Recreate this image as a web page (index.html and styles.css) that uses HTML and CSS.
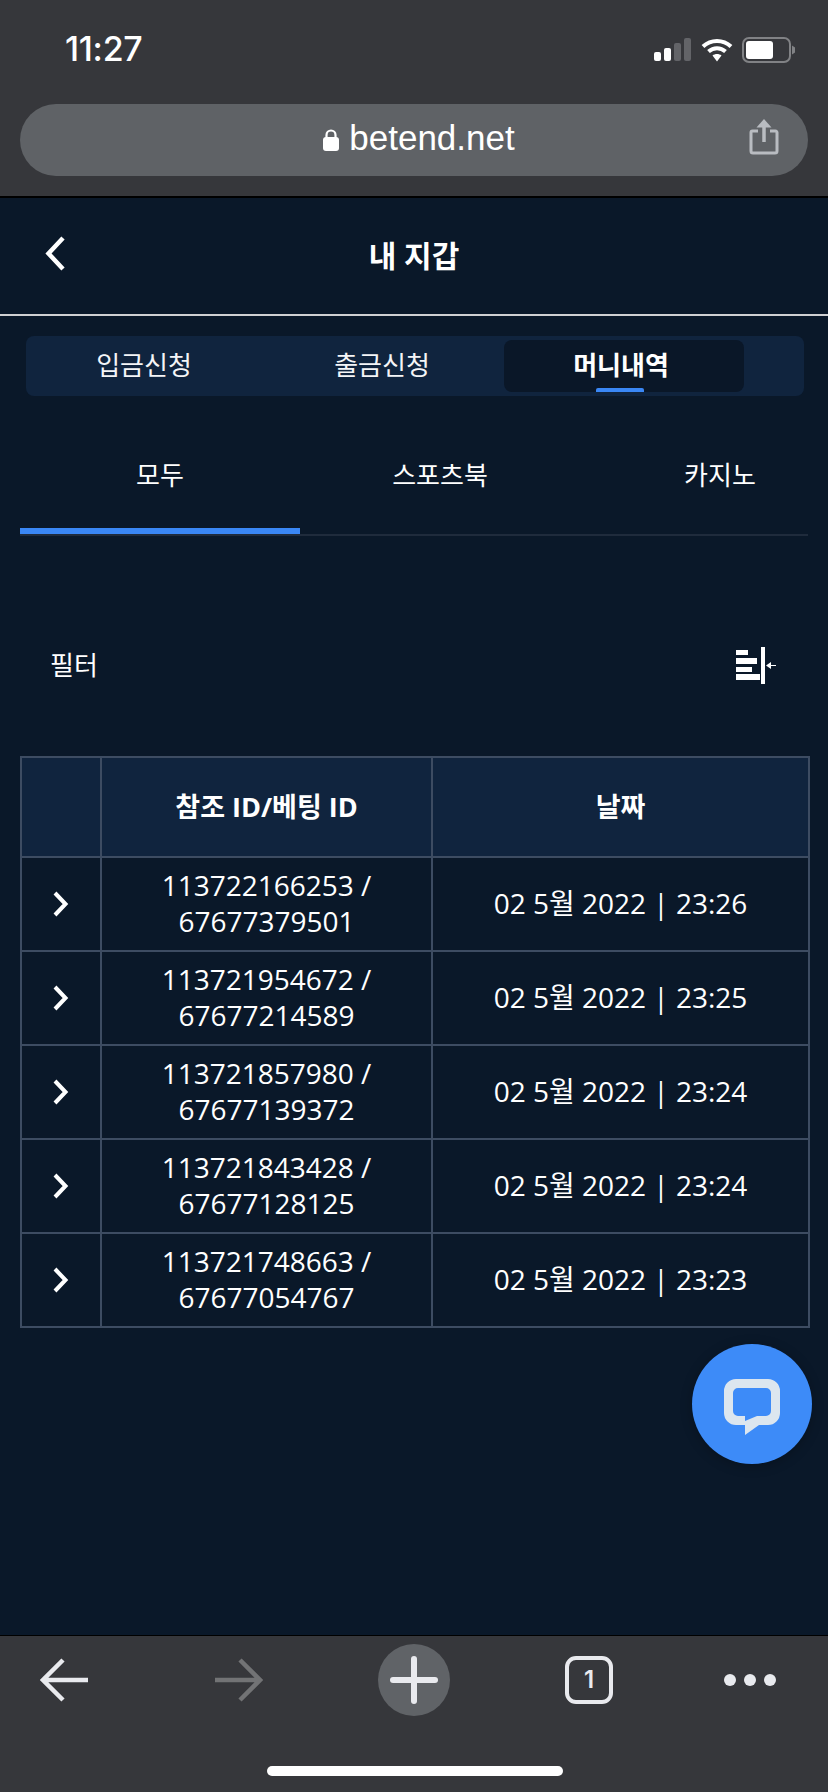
FILE: index.html
```html
<!DOCTYPE html>
<html lang="ko">
<head>
<meta charset="utf-8">
<title>내 지갑</title>
<link rel="stylesheet" href="styles.css">
</head>
<body>
<div class="phone">
  <div class="browser-top">
    <div class="status">
      <span class="clock">11:27</span>
      <div class="status-icons">
        <svg class="signal" width="38" height="24" viewBox="0 0 38 24"><rect x="0" y="15" width="7" height="9" rx="2" fill="#fff"/><rect x="10" y="11" width="7" height="13" rx="2" fill="#fff"/><rect x="20" y="6" width="7" height="18" rx="2" fill="#636468"/><rect x="30" y="1" width="7" height="23" rx="2" fill="#636468"/></svg>
        <svg class="wifi" width="32" height="25" viewBox="0 0 32 25"><path d="M2 9.5C10 2 22 2 30 9.5" fill="none" stroke="#fff" stroke-width="4"/><path d="M7.5 14.5C12.5 10 19.500 10 24.500 14.500" fill="none" stroke="#fff" stroke-width="4"/><path d="M11.500 18.500 16 24.500 20.500 18.500C18 16.500 14 16.500 11.500 18.500Z" fill="#fff"/></svg>
        <svg class="battery" width="54" height="26" viewBox="0 0 54 26"><rect x="1" y="1" width="47" height="24" rx="6" fill="none" stroke="#818285" stroke-width="2"/><rect x="4" y="4" width="27" height="18" rx="3" fill="#fff"/><path d="M50 8.500 53 10.500V15.500L50 17.500Z" fill="#818285"/></svg>
      </div>
    </div>
    <div class="urlbar">
      <svg class="lock" width="16" height="22" viewBox="0 0 16 22"><path d="M3.500 9V6a4.500 4.500 0 0 1 9 0v3" fill="none" stroke="#fff" stroke-width="2.200"/><rect x="0" y="8" width="16" height="14" rx="3" fill="#fff"/></svg>
      <span class="url">betend.net</span>
      <svg class="share" width="30" height="37" viewBox="0 0 30 37"><path d="M9 13H3.500A1.500 1.500 0 0 0 2 14.500V33a2 2 0 0 0 2 2H26a2 2 0 0 0 2-2V14.500A1.500 1.500 0 0 0 26.500 13H21" fill="none" stroke="#b9bcc1" stroke-width="3"/><path d="M15 24V4" stroke="#b9bcc1" stroke-width="3.500"/><path d="M7.500 9.500 15 1l7.500 8.500Z" fill="#b9bcc1"/></svg>
    </div>
  </div>

  <main class="page">
    <header class="page-head">
      <svg class="head-back" width="22" height="35" viewBox="0 0 22 35"><path d="M19 2 4.500 17.500 19 33" fill="none" stroke="#fff" stroke-width="4.500"/></svg>
      <h1 class="page-title">내 지갑</h1>
    </header>

    <nav class="segments">
      <a class="segment">입금신청</a>
      <a class="segment segment-mid">출금신청</a>
      <a class="segment segment-active">머니내역</a>
    </nav>

    <div class="subtabs">
      <a class="subtab subtab-active">모두</a>
      <a class="subtab">스포츠북</a>
      <a class="subtab">카지노</a>
    </div>

    <div class="filter">
      <span class="filter-label">필터</span>
      <svg class="filter-icon" width="40" height="37" viewBox="0 0 40 37"><rect x="0" y="3" width="12" height="5" fill="#fff"/><rect x="0" y="11" width="21" height="6" fill="#fff"/><rect x="0" y="20" width="16" height="5" fill="#fff"/><rect x="0" y="27" width="24" height="6" fill="#fff"/><rect x="25" y="0" width="4" height="37" fill="#fff"/><path d="M30 18.500 35 15V18H40V19H35V22Z" fill="#fff"/></svg>
    </div>

    <table class="history">
      <colgroup><col class="col-toggle"><col class="col-ref"><col class="col-date"></colgroup>
      <thead>
        <tr><th></th><th>참조 ID/베팅 ID</th><th>날짜</th></tr>
      </thead>
      <tbody>
        <tr><td><svg class="chev" width="18" height="26" viewBox="0 0 18 26"><path d="M3 2 13.500 13 3 24" fill="none" stroke="#fff" stroke-width="4"/></svg></td><td>113722166253 / 67677379501</td><td>02 5월 2022 | 23:26</td></tr>
        <tr><td><svg class="chev" width="18" height="26" viewBox="0 0 18 26"><path d="M3 2 13.500 13 3 24" fill="none" stroke="#fff" stroke-width="4"/></svg></td><td>113721954672 / 67677214589</td><td>02 5월 2022 | 23:25</td></tr>
        <tr><td><svg class="chev" width="18" height="26" viewBox="0 0 18 26"><path d="M3 2 13.500 13 3 24" fill="none" stroke="#fff" stroke-width="4"/></svg></td><td>113721857980 / 67677139372</td><td>02 5월 2022 | 23:24</td></tr>
        <tr><td><svg class="chev" width="18" height="26" viewBox="0 0 18 26"><path d="M3 2 13.500 13 3 24" fill="none" stroke="#fff" stroke-width="4"/></svg></td><td>113721843428 / 67677128125</td><td>02 5월 2022 | 23:24</td></tr>
        <tr><td><svg class="chev" width="18" height="26" viewBox="0 0 18 26"><path d="M3 2 13.500 13 3 24" fill="none" stroke="#fff" stroke-width="4"/></svg></td><td>113721748663 / 67677054767</td><td>02 5월 2022 | 23:23</td></tr>
      </tbody>
    </table>

    <button class="chat" type="button" aria-label="chat">
      <svg width="56" height="56" viewBox="0 0 56 56"><path fill-rule="evenodd" d="M12 0H44A12 12 0 0 1 56 12V34A12 12 0 0 1 44 46H35L21 56V46H12A12 12 0 0 1 0 34V12A12 12 0 0 1 12 0ZM14 9A5 5 0 0 0 9 14V32A5 5 0 0 0 14 37H21V42L33 37H42A5 5 0 0 0 47 32V14A5 5 0 0 0 42 9Z" fill="#dce6ef"/></svg>
    </button>
  </main>

  <footer class="browser-bottom">
    <div class="toolbar">
      <svg width="48" height="44" viewBox="0 0 48 44"><path d="M23 2 3 22 23 42M3 22H48" fill="none" stroke="#e9eaee" stroke-width="4.500"/></svg>
      <svg width="48" height="44" viewBox="0 0 48 44"><path d="M25 2 45 22 25 42M45 22H0" fill="none" stroke="#727375" stroke-width="4.500"/></svg>
      <div class="plus-circle"><svg width="48" height="48" viewBox="0 0 48 48"><rect x="0" y="21" width="48" height="6" rx="3" fill="#e9eaee"/><rect x="21" y="0" width="6" height="48" rx="3" fill="#e9eaee"/></svg></div>
      <div class="tab-count">1</div>
      <svg width="52" height="12" viewBox="0 0 52 12"><circle cx="6" cy="6" r="6" fill="#e9eaee"/><circle cx="26" cy="6" r="6" fill="#e9eaee"/><circle cx="46" cy="6" r="6" fill="#e9eaee"/></svg>
    </div>
    <div class="home-indicator"></div>
  </footer>
</div>
</body>
</html>
```

FILE: styles.css
```css
* { box-sizing: border-box; }
html, body { margin: 0; padding: 0; }
body { background: #0a1829; }

.phone {
  width: 828px;
  height: 1792px;
  display: flex;
  flex-direction: column;
  overflow: hidden;
  color: #fff;
  font-family: "Open Sans", "Noto Sans CJK KR", sans-serif;
}

.browser-top {
  height: 198px;
  flex: none;
  background: #36373b;
  border-bottom: 2px solid #000;
  padding: 0 20px;
}
.status {
  height: 104px;
  display: flex;
  justify-content: space-between;
  align-items: flex-start;
  padding: 29px 0 0 45px;
}
.clock {
  font: 500 34px/40px Inter, "Liberation Sans", sans-serif;
  letter-spacing: -0.3px;
}
.status-icons {
  display: flex;
  align-items: flex-start;
  margin-right: 12px;
  margin-top: 8px;
}
.signal { margin-right: 9px; }
.wifi { margin-right: 9px; }

.urlbar {
  position: relative;
  height: 72px;
  border-radius: 36px;
  background: #5f6266;
  display: flex;
  align-items: center;
  justify-content: center;
  gap: 10px;
  padding-left: 10px;
}
.url {
  font: 400 35px/40px "Liberation Sans", sans-serif;
  color: #fff;
  margin-top: -4px;
}
.lock { margin-top: 0; }
.share { position: absolute; right: 29px; top: 14px; }

.page {
  position: relative;
  flex: 1;
  min-height: 0;
  background: #0a1829;
}
.page-head {
  height: 118px;
  border-bottom: 2px solid #cfd0d2;
  display: flex;
  align-items: center;
  justify-content: center;
  position: relative;
}
.head-back { position: absolute; left: 44px; top: 38px; }
.page-title {
  margin: 0;
  font-size: 30px;
  font-weight: 700;
  line-height: 40px;
}

.segments {
  margin: 20px 24px 0 26px;
  height: 60px;
  background: #10243e;
  border-radius: 8px;
  padding: 4px 60px 4px 0;
  display: grid;
  grid-template-columns: 236px 242px 240px;
}
.segment {
  display: flex;
  align-items: center;
  justify-content: center;
  font-size: 26px;
  line-height: 36px;
  padding-bottom: 2px;
  border-radius: 8px;
  position: relative;
  color: #f4f5f7;
}
.segment-mid { padding-right: 2px; }
.segment-active {
  background: #0a1728;
  font-weight: 700;
  color: #fff;
  padding-right: 6px;
}
.segment-active::after {
  content: "";
  position: absolute;
  left: 92px;
  bottom: 0;
  width: 48px;
  height: 4px;
  border-radius: 2px 2px 0 0;
  background: #3a87f5;
}

.subtabs {
  margin: 32px 20px 0;
  display: flex;
  overflow: hidden;
  border-bottom: 2px solid #1f2b3c;
}
.subtab {
  flex: 0 0 280px;
  height: 106px;
  padding-bottom: 6px;
  display: flex;
  align-items: center;
  justify-content: center;
  font-size: 26px;
  line-height: 36px;
  border-bottom: 6px solid transparent;
}
.subtab-active { border-bottom-color: #3a87f5; }

.filter {
  margin-top: 84px;
  height: 90px;
  display: flex;
  align-items: center;
  justify-content: space-between;
  padding: 0 52px 0 50px;
}
.filter-label { font-size: 26px; line-height: 36px; }

.history {
  margin: 46px 0 0 20px;
  width: 788px;
  table-layout: fixed;
  border-collapse: collapse;
  font-size: 28px;
  line-height: 36px;
}
.col-toggle { width: 80px; }
.col-ref { width: 331px; }
.col-date { width: 377px; }
.history th, .history td {
  border: 2px solid #3d4c62;
  text-align: center;
  vertical-align: middle;
  padding: 0 24px;
}
.history th {
  height: 100px;
  background: #10243e;
  font-size: 27px;
  font-weight: 700;
}
.history td { height: 94px; padding-bottom: 2px; }
.history td:first-child { padding: 0; }
.chev { display: block; margin: 0 auto; }

.chat {
  position: absolute;
  left: 692px;
  top: 1146px;
  width: 120px;
  height: 120px;
  padding: 0;
  border: 0;
  border-radius: 50%;
  background: #3d8bf8;
  display: flex;
  align-items: center;
  justify-content: center;
  box-shadow: 0 2px 12px rgba(0,0,0,.25);
}
.chat svg { position: relative; top: 3px; }

.browser-bottom {
  height: 157px;
  flex: none;
  background: #36373b;
  border-top: 1px solid #000;
  position: relative;
}
.toolbar {
  height: 72px;
  margin-top: 8px;
  display: grid;
  grid-template-columns: 175px 163px 187px 159px 52px;
  align-items: center;
  justify-items: start;
  padding-left: 40px;
}
.plus-circle {
  width: 72px;
  height: 72px;
  border-radius: 50%;
  background: #606367;
  display: flex;
  align-items: center;
  justify-content: center;
}
.tab-count {
  width: 48px;
  height: 48px;
  border: 4px solid #e9eaee;
  border-radius: 11px;
  display: flex;
  align-items: center;
  justify-content: center;
  font: 600 24px/1 Inter, sans-serif;
  color: #e9eaee;
}
.home-indicator {
  position: absolute;
  left: 267px;
  bottom: 16px;
  width: 296px;
  height: 10px;
  border-radius: 5px;
  background: #fff;
}
```
